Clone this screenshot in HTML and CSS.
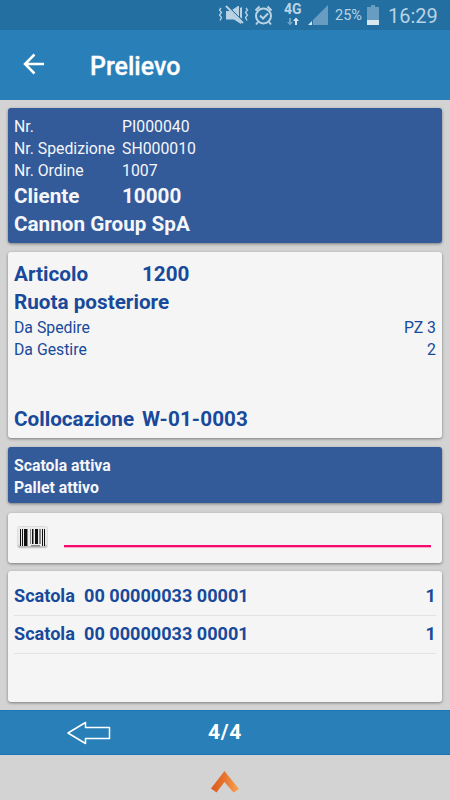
FILE: index.html
```html
<!DOCTYPE html>
<html lang="it">
<head>
<meta charset="utf-8">
<title>Prelievo</title>
<link rel="stylesheet" href="styles.css">
</head>
<body>
<div class="status">
  <svg class="status-icons" width="120" height="30" viewBox="210 0 120 30">
    <g fill="none" stroke="#b9d3e4" stroke-width="1.3">
      <path d="M221 8l-1.500 2 2 2.500-2 2.500 2 2.500-1.500 3M246 8l1.500 2-2 2.500 2 2.500-2 2.500 1.500 3"/>
      <circle cx="263.500" cy="16" r="7.500" stroke-width="2"/>
      <path d="M260 15.500l3 3 5-5" stroke-width="2"/>
      <path d="M255.500 10.500l4-4M271.500 10.500l-4-4M258 22l-2 2.500M269 22l2 2.500" stroke-width="2"/>
    </g>
    <path fill="#b9d3e4" d="M226 11h4l11 11v2l-7-4.500h-8zM232 10l6-4h1v12z"/>
    <path d="M226 6l17 17" stroke="#b9d3e4" stroke-width="2"/>
    <path d="M227.500 5.500l17 17" stroke="#236fa2"/>
    <path fill="#b9d3e4" d="M240 8l2-1v12l-2-2z"/>
    <path fill="#6fa4c6" d="M289 18h2v4h2l-3 3.500-3-3.500h2z"/>
    <path fill="#d7e6f0" d="M295 25h2v-4h2l-3-3.500-3 3.500h2z"/>
    <path fill="#689dc1" d="M328 5v20h-15v-5z"/>
    <path fill="#d7e6f0" d="M312 21v4h-4z"/>
  </svg>
  <span class="network">4G</span>
  <span class="percent">25%</span>
  <svg class="battery" width="12" height="20" viewBox="0 0 12 20"><path fill="#689dc1" d="M4 0h4v2h4v13H0V2h4z"/><path fill="#d9e7f0" d="M0 15h12v5H0z"/></svg>
  <span class="clock">16:29</span>
</div>
<header class="appbar">
  <svg width="22" height="22" viewBox="0 0 22 22" fill="none" stroke="#fff" stroke-width="2.500"><path d="M21 11H2.500M11.500 1.500L2 11l9.500 9.500"/></svg>
  <h1>Prelievo</h1>
</header>
<main>
  <section class="card blue order">
    <div class="row"><span class="label">Nr.</span><span>PI000040</span></div>
    <div class="row"><span class="label">Nr. Spedizione</span><span>SH000010</span></div>
    <div class="row"><span class="label">Nr. Ordine</span><span>1007</span></div>
    <div class="row big"><span class="label">Cliente</span><span>10000</span></div>
    <div class="row big">Cannon Group SpA</div>
  </section>
  <section class="card item">
    <div class="row big"><span class="label">Articolo</span><span>1200</span></div>
    <div class="row big">Ruota posteriore</div>
    <div class="row split"><span>Da Spedire</span><span>PZ 3</span></div>
    <div class="row split"><span>Da Gestire</span><span>2</span></div>
    <div class="row big place"><span class="label">Collocazione</span><span class="bin">W-01-0003</span></div>
  </section>
  <section class="card blue active">
    <div class="row">Scatola attiva</div>
    <div class="row">Pallet attivo</div>
  </section>
  <section class="card scan">
    <svg width="32" height="24" viewBox="0 0 32 24">
      <defs><linearGradient id="label" x2="0" y2="1"><stop stop-color="#ececec"/><stop offset=".8" stop-color="#e6e6e6"/><stop offset="1" stop-color="#aaa"/></linearGradient></defs>
      <rect x=".5" y=".5" width="30" height="21.500" rx="2" fill="url(#label)" stroke="#ddd"/>
      <path fill="#eee" d="M3 3h25v17H3z"/>
      <path fill="#111" d="M3 3h1v17H3zM5 3h1v17H5zM7 3h3v17H7zM15 3h1v15h-1zM18 3h3v15h-3zM25 3h1v17h-1zM27 3h1v17h-1z"/>
      <path fill="#888" d="M10 3h1v17h-1zM13 3h1v15h-1zM16 3h1v15h-1zM22 3h2v15h-2zM14 19h9v1.500h-9z"/>
    </svg>
    <div class="field"></div>
  </section>
  <section class="card boxes">
    <div class="box"><span class="label">Scatola</span><span>00 00000033 00001</span><span class="count">1</span></div>
    <div class="box"><span class="label">Scatola</span><span>00 00000033 00001</span><span class="count">1</span></div>
  </section>
</main>
<nav class="pager">
  <svg width="44" height="24" viewBox="0 0 44 24" fill="none" stroke="#fff" stroke-width="1.500" stroke-linejoin="round"><path d="M1 12L18.500 1.500v5H42.500v11h-24v5z"/></svg>
  <span>4/4</span>
</nav>
<footer>
  <svg width="30" height="24" viewBox="0 0 30 24">
    <defs><linearGradient id="orange"><stop stop-color="#d9591c"/><stop offset=".5" stop-color="#e87530"/><stop offset="1" stop-color="#f7a451"/></linearGradient></defs>
    <path fill="url(#orange)" d="M14.500 1L29 19l-5.500 3.500L14.500 12 6.500 22.500 1 18.500z"/>
  </svg>
</footer>
</body>
</html>
```

FILE: styles.css
```css
* { box-sizing: border-box; }
body {
  margin: 0;
  width: 450px;
  height: 800px;
  display: flex;
  flex-direction: column;
  overflow: hidden;
  background: #d3d3d3;
  font-family: Roboto, sans-serif;
  font-size: 15.8px;
}
.status {
  position: relative;
  height: 30px;
  flex: none;
  display: flex;
  align-items: center;
  padding-left: 210px;
  background: #236fa2;
  color: #b9d3e4;
}
.status-icons { flex: none; }
.network {
  position: absolute;
  left: 284px;
  top: 2px;
  font-size: 14px;
  line-height: 15px;
  font-weight: 700;
}
.percent { width: 31px; margin-left: 5px; font-size: 14.5px; line-height: 30px; padding-top: 2px; }
.battery { flex: none; margin: 0 9px 0 1px; }
.clock { font-size: 20px; line-height: 30px; padding-top: 1px; }
.appbar {
  height: 70px;
  flex: none;
  display: flex;
  align-items: center;
  gap: 45px;
  padding: 0 23px;
  background: #2980b9;
  color: #fff;
}
.appbar svg { position: relative; top: -1px; }
h1 { margin: 0; padding-top: 2px; font-size: 25px; font-weight: 500; -webkit-text-stroke: .3px; }
main { height: 610px; flex: none; padding: 8px 8px 0; }
.card {
  padding: 7px 6px 0;
  border-radius: 3px;
  background: #f5f5f5;
  color: #18499a;
  box-shadow: 0 1px 3px rgba(0, 0, 0, .42);
}
.blue { background: #335a99; color: #f5f6fa; }
.row { display: flex; height: 22px; line-height: 22px; white-space: nowrap; }
.big { height: 28px; line-height: 28px; font-size: 20.7px; font-weight: 700; }
.order { height: 135px; padding-top: 7.5px; }
.order .label { width: 108px; }
.item { height: 186px; margin-top: 9px; padding-top: 8px; }
.item .label { width: 128px; }
.item .split { position: relative; top: 1px; }
.split { justify-content: space-between; }
.item .place { margin-top: 45px; }
.bin { letter-spacing: .12px; }
.active { height: 56px; margin-top: 9px; padding-top: 8px; font-weight: 700; }
.scan { display: flex; height: 50px; margin-top: 10px; padding: 13px 11px 0 9px; }
.field { height: 21px; flex: 1; margin-left: 15px; border-bottom: 2px solid #f50a6e; box-shadow: 0 1px 0 #f9a4c6; }
.boxes { height: 131px; margin-top: 8px; padding-top: 7px; }
.box { display: flex; height: 38px; line-height: 35px; border-bottom: 1px solid #e3e3e3; font-size: 18.1px; font-weight: 700; white-space: nowrap; }
.box .label { width: 70px; }
.count { margin-left: auto; }
.pager {
  height: 45px;
  flex: none;
  display: flex;
  align-items: center;
  gap: 97px;
  padding-left: 67px;
  background: #2980b9;
  border-top: 1px solid #1976b8;
  border-bottom: 1px solid #1976b8;
  color: #fff;
  font-size: 21px;
  font-weight: 700;
  letter-spacing: .7px;
}
.pager span { margin-top: -1px; }
footer { display: flex; justify-content: center; padding-top: 15px; }
```
